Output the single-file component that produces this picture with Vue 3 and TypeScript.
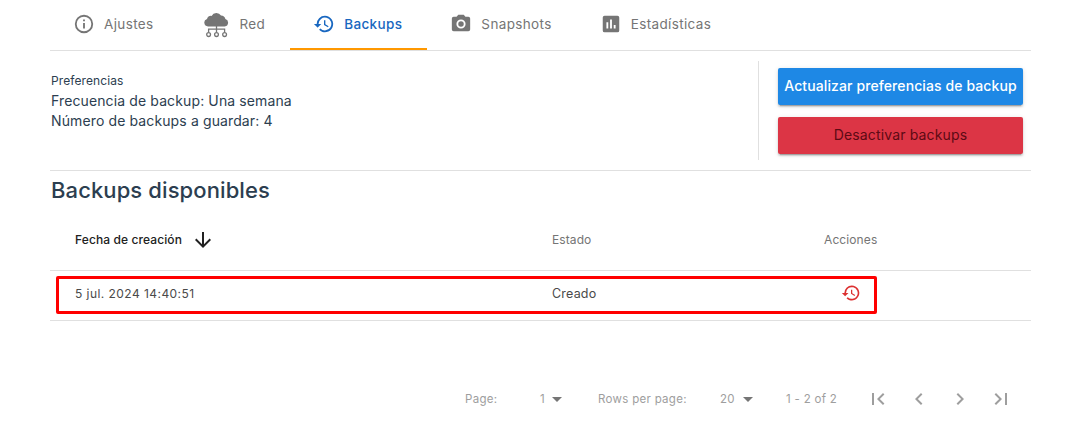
<script setup lang="ts">
interface Tab { label: string; active?: boolean }
const tabs: Tab[] = [
  { label: 'Ajustes' },
  { label: 'Red' },
  { label: 'Backups', active: true },
  { label: 'Snapshots' },
  { label: 'Estadísticas' },
]
const historyPath = 'M13 3a9 9 0 0 0-9 9H1l3.89 3.89.07.14L9 12H6a7 7 0 1 1 2.05 4.95l-1.42 1.42A9 9 0 1 0 13 3zm-1 5v5l4.28 2.54.72-1.21-3.5-2.08V8H12z'
</script>

<template>
  <div class="page">
    <nav class="tabs">
      <div v-for="(t, i) in tabs" :key="t.label" class="tab" :class="{ active: t.active }">
        <svg v-if="i === 0" class="ic" viewBox="0 0 24 24"><path fill="currentColor" d="M11 7h2v2h-2zm0 4h2v6h-2zm1-9a10 10 0 1 0 0 20 10 10 0 0 0 0-20zm0 18a8 8 0 1 1 0-16 8 8 0 0 1 0 16z"/></svg>
        <svg v-else-if="i === 1" class="ic-cloud" viewBox="0 0 25 25">
          <path fill="currentColor" d="M4 13.5a3.9 3.9 0 0 1-1-7.6 4.4 4.4 0 0 1 4.6-3A5.4 5.4 0 0 1 17 2.6a4.6 4.6 0 0 1 4.4 3.5 3.8 3.8 0 0 1-.6 7.4z"/>
          <path fill="none" stroke="currentColor" stroke-width="1.3" d="M12.5 13v6M4.6 19v-2.8h16V19"/>
          <circle cx="4.6" cy="21.6" r="1.9" fill="none" stroke="currentColor" stroke-width="1.3"/>
          <circle cx="12.5" cy="21.6" r="1.9" fill="none" stroke="currentColor" stroke-width="1.3"/>
          <circle cx="20.6" cy="21.6" r="1.9" fill="none" stroke="currentColor" stroke-width="1.3"/>
        </svg>
        <svg v-else-if="i === 2" class="ic" viewBox="0 0 24 24"><path fill="currentColor" :d="historyPath"/></svg>
        <svg v-else-if="i === 3" class="ic" viewBox="0 0 24 24"><path fill="currentColor" d="M9 2 7.17 4H4a2 2 0 0 0-2 2v12a2 2 0 0 0 2 2h16a2 2 0 0 0 2-2V6a2 2 0 0 0-2-2h-3.17L15 2H9zm3 15a5 5 0 1 1 0-10 5 5 0 0 1 0 10zm0-2a3 3 0 1 0 0-6 3 3 0 0 0 0 6z" fill-rule="evenodd"/></svg>
        <svg v-else class="ic" viewBox="0 0 24 24"><path fill="currentColor" d="M19 3H5a2 2 0 0 0-2 2v14a2 2 0 0 0 2 2h14a2 2 0 0 0 2-2V5a2 2 0 0 0-2-2zM9 17H7v-7h2v7zm4 0h-2V7h2v10zm4 0h-2v-4h2v4z"/></svg>
        <span>{{ t.label }}</span>
      </div>
    </nav>

    <section class="prefs">
      <div class="prefs-info">
        <div class="prefs-title">Preferencias</div>
        <div class="prefs-line">Frecuencia de backup: Una semana</div>
        <div class="prefs-line">Número de backups a guardar: 4</div>
      </div>
      <div class="prefs-actions">
        <button class="btn blue">Actualizar preferencias de backup</button>
        <button class="btn red">Desactivar backups</button>
      </div>
    </section>

    <h2 class="heading">Backups disponibles</h2>

    <div class="table">
      <div class="row head">
        <div class="cell sorted">
          <span>Fecha de creación</span>
          <svg class="arrow" viewBox="0 0 24 24"><path fill="currentColor" d="m20 12-1.41-1.41L13 16.17V4h-2v12.17l-5.58-5.59L4 12l8 8 8-8z"/></svg>
        </div>
        <div class="cell label-cell">Estado</div>
        <div class="cell label-cell">Acciones</div>
      </div>
      <div class="row body">
        <div class="cell date">5 jul. 2024 14:40:51</div>
        <div class="cell status">Creado</div>
        <div class="cell action">
          <svg class="restore" viewBox="0 0 24 24"><path fill="currentColor" :d="historyPath"/></svg>
        </div>
        <div class="highlight"></div>
      </div>
    </div>

    <footer class="pager">
      <span class="label page-label">Page:</span>
      <span class="select page-select"><span>1</span><i class="caret"></i></span>
      <span class="label rows-label">Rows per page:</span>
      <span class="select rows-select"><span>20</span><i class="caret"></i></span>
      <span class="label range">1 - 2 of 2</span>
      <div class="nav">
        <svg viewBox="0 0 24 24"><path fill="currentColor" d="M18.41 16.59 13.82 12l4.59-4.59L17 6l-6 6 6 6zM6 6h2v12H6z"/></svg>
        <svg viewBox="0 0 24 24"><path fill="currentColor" d="M15.41 7.41 14 6l-6 6 6 6 1.41-1.41L10.83 12z"/></svg>
        <svg viewBox="0 0 24 24"><path fill="currentColor" d="M10 6 8.59 7.41 13.17 12l-4.58 4.59L10 18l6-6z"/></svg>
        <svg viewBox="0 0 24 24"><path fill="currentColor" d="M5.59 7.41 10.18 12l-4.59 4.59L7 18l6-6-6-6zM16 6h2v12h-2z"/></svg>
      </div>
    </footer>
  </div>
</template>

<style>
html, body { background: #fff; margin: 0; }
</style>

<style scoped>
.page {
  width: 981px;
  margin-left: 50px;
  font-family: Inter, "Liberation Sans", sans-serif;
  color: #2c3e50;
}
.tabs {
  display: flex;
  height: 50px;
  border-bottom: 1px solid #e0e0e0;
}
.tab {
  display: flex;
  align-items: center;
  gap: 11px;
  height: 50px;
  padding: 0 25px 2px;
  box-sizing: border-box;
  font-size: 13.5px;
  letter-spacing: 0.36px;
  font-weight: 400;
  color: #757575;
}
.tab.active {
  color: #1867c0;
  font-weight: 500;
  padding-bottom: 0;
  border-bottom: 2px solid #ff9800;
}
.ic { width: 22px; height: 22px; margin: 0 -2px; flex: none; }
.ic-cloud { width: 25px; height: 25px; flex: none; margin-top: 2px; }
.prefs {
  display: flex;
  justify-content: space-between;
  height: 120px;
  padding-top: 10px;
  box-sizing: border-box;
  border-bottom: 1px solid #e0e0e0;
}
.prefs-info { padding: 13px 0 0 1px; }
.prefs-title { font-size: 12px; line-height: 14px; margin-bottom: 3px; letter-spacing: 0.1px; }
.prefs-line { font-size: 14px; line-height: 20px; letter-spacing: 0.12px; }
.prefs-actions {
  display: flex;
  flex-direction: column;
  gap: 12px;
  width: 273px;
  height: 99px;
  box-sizing: border-box;
  padding: 7px 8px 0 19px;
  border-left: 1px solid #e0e0e0;
}
.btn {
  height: 37px;
  border: 0;
  border-radius: 2px;
  padding: 0 0 3px;
  font-family: inherit;
  font-size: 14px;
  font-weight: 500;
  letter-spacing: 0.1px;
  box-shadow: 0 3px 1px -2px rgba(0,0,0,.2), 0 2px 2px rgba(0,0,0,.14), 0 1px 5px rgba(0,0,0,.12);
}
.blue { background: #1e88e5; color: #fff; }
.red { background: #dc3545; color: #5c0a14; font-weight: 400; letter-spacing: 0.15px; padding-bottom: 2px; }
.heading {
  margin: 0;
  height: 33px;
  padding-top: 6px;
  font-size: 22px;
  line-height: 26px;
  font-weight: 500;
  letter-spacing: 0.1px;
  color: #2c3e50;
  padding-left: 1px;
}
.table { font-size: 12px; color: #757575; }
.row {
  display: grid;
  grid-template-columns: 477px 272px 232px;
  align-items: center;
  border-bottom: 1px solid #e0e0e0;
  position: relative;
}
.row .cell { padding-left: 25px; }
.head { height: 60px; }
.head .cell { letter-spacing: 0.1px; padding-bottom: 1px; }
.sorted { display: flex; align-items: center; gap: 9px; color: #212121; font-weight: 500; }
.arrow { width: 24px; height: 24px; color: #212121; flex: none; }
.body { padding-bottom: 4px; box-sizing: border-box; height: 50px; }
.date { font-size: 12px; letter-spacing: 0.45px; color: #4a4a4a; padding-bottom: 1px; }
.status { font-size: 12.5px; letter-spacing: 0.2px; color: #4a4a4a; }
.row .action { display: flex; justify-content: flex-start; padding-left: 42px; padding-bottom: 1px; }
.restore { width: 20px; height: 20px; color: #dc3030; }
.highlight {
  position: absolute;
  left: 6px;
  top: 5px;
  width: 821px;
  height: 38px;
  box-sizing: border-box;
  border: 3px solid #ff0000;
  border-radius: 2px;
}
.pager {
  display: flex;
  align-items: center;
  height: 24px;
  margin-top: 66px;
  font-size: 11.5px;
  letter-spacing: 0.3px;
  color: #9e9e9e;
}
.page-label { margin-left: 415px; width: 75px; }
.select { display: flex; align-items: center; gap: 7px; color: #9e9e9e; }
.page-select { width: 58px; }
.rows-select { width: 66px; gap: 8px; }
.rows-label { width: 122px; }
.range { width: 80px; }
.caret {
  width: 0;
  height: 0;
  border-left: 5px solid transparent;
  border-right: 5px solid transparent;
  border-top: 5px solid #757575;
}
.nav { display: flex; gap: 17px; }
.nav svg { width: 24px; height: 24px; color: #9e9e9e; flex: none; }
</style>
